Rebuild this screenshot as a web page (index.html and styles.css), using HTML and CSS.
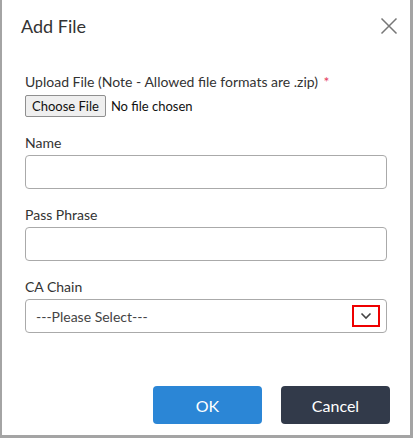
FILE: index.html
```html
<!DOCTYPE html>
<html lang="en">
<head>
    <meta charset="UTF-8">
    <title>Add File</title>
    <link rel="stylesheet" href="styles.css">
</head>
<body>
    <div class="dialog">
        <div class="dialog-header">
            <h2>Add File</h2>
            <button class="close-btn" aria-label="Close">
                <svg width="18" height="18" viewBox="0 0 18 18">
                    <path d="M1.5 1.5 L16.5 16.5 M16.5 1.5 L1.5 16.5" stroke="#777" stroke-width="1.5" fill="none"/>
                </svg>
            </button>
        </div>

        <div class="dialog-body">
            <div class="field upload">
                <label>Upload File (Note - Allowed file formats are .zip) <span class="req">*</span></label>
                <div class="file-row">
                    <span class="file-btn">Choose File</span>
                    <span class="file-name">No file chosen</span>
                </div>
            </div>

            <div class="field">
                <label>Name</label>
                <input type="text" class="text-input">
            </div>

            <div class="field">
                <label>Pass Phrase</label>
                <input type="text" class="text-input">
            </div>

            <div class="field">
                <label>CA Chain</label>
                <div class="select">
                    <span>---Please Select---</span>
                    <span class="chevron">
                        <svg width="12" height="8" viewBox="0 0 12 8">
                            <path d="M1.5 1.5 L6 6 L10.5 1.5" stroke="#444" stroke-width="1.6" fill="none"/>
                        </svg>
                    </span>
                </div>
            </div>
        </div>

        <div class="dialog-footer">
            <button class="btn btn-ok">OK</button>
            <button class="btn btn-cancel">Cancel</button>
        </div>
    </div>
</body>
</html>
```

FILE: styles.css
```css
body {
    margin: 0;
    padding: 0;
    background: #fff;
    font-family: Lato, "Liberation Sans", sans-serif;
    color: #333;
}

.dialog {
    width: 413px;
    height: 438px;
    box-sizing: border-box;
    border-left: 2px solid #a4a4a4;
    border-right: 3px solid #a4a4a4;
    border-bottom: 3px solid #a4a4a4;
    background: #fff;
    display: flex;
    flex-direction: column;
}

.dialog-header {
    height: 52px;
    padding: 0 11px 0 19px;
    display: flex;
    align-items: center;
    justify-content: space-between;
}

.dialog-header h2 {
    margin: 0;
    font-size: 18px;
    font-weight: normal;
    color: #333;
}

.close-btn {
    background: none;
    border: none;
    padding: 0;
    width: 20px;
    height: 20px;
    display: flex;
    align-items: center;
    justify-content: center;
    cursor: pointer;
}

.dialog-body {
    padding: 21px 23px 0 23px;
    display: flex;
    flex-direction: column;
    gap: 17px;
}

.field label {
    display: block;
    font-size: 14px;
    line-height: 18px;
    color: #333;
    margin-bottom: 3px;
}

.upload label {
    margin-bottom: 4px;
}

.req {
    color: #e5405e;
    margin-left: 2px;
}

.file-row {
    display: flex;
    align-items: center;
    gap: 5px;
    font-size: 13px;
}

.file-btn {
    display: inline-block;
    padding: 3px 6px;
    border: 1px solid #8f8f8f;
    border-radius: 2px;
    background: #efefef;
    color: #111;
    line-height: 14px;
}

.file-name {
    color: #111;
}

.text-input {
    display: block;
    width: 100%;
    height: 34px;
    box-sizing: border-box;
    border: 1px solid #aaa;
    border-radius: 4px;
    font-family: inherit;
    font-size: 14px;
    padding: 0 10px;
}

.select {
    height: 34px;
    box-sizing: border-box;
    border: 1px solid #aaa;
    border-radius: 4px;
    display: flex;
    align-items: center;
    justify-content: space-between;
    padding: 0 6px 0 10px;
    font-size: 14px;
    color: #444;
}

.chevron {
    width: 24px;
    height: 18px;
    border: 2px solid #e00;
    display: flex;
    align-items: center;
    justify-content: center;
}

.dialog-footer {
    margin-top: auto;
    padding: 0 20px 11px 0;
    display: flex;
    justify-content: flex-end;
    gap: 19px;
}

.btn {
    width: 109px;
    height: 38px;
    border: none;
    border-radius: 4px;
    color: #fff;
    font-family: inherit;
    font-size: 16px;
    cursor: pointer;
}

.btn-ok {
    background: #2b86d6;
}

.btn-cancel {
    background: #323a4a;
}
```
